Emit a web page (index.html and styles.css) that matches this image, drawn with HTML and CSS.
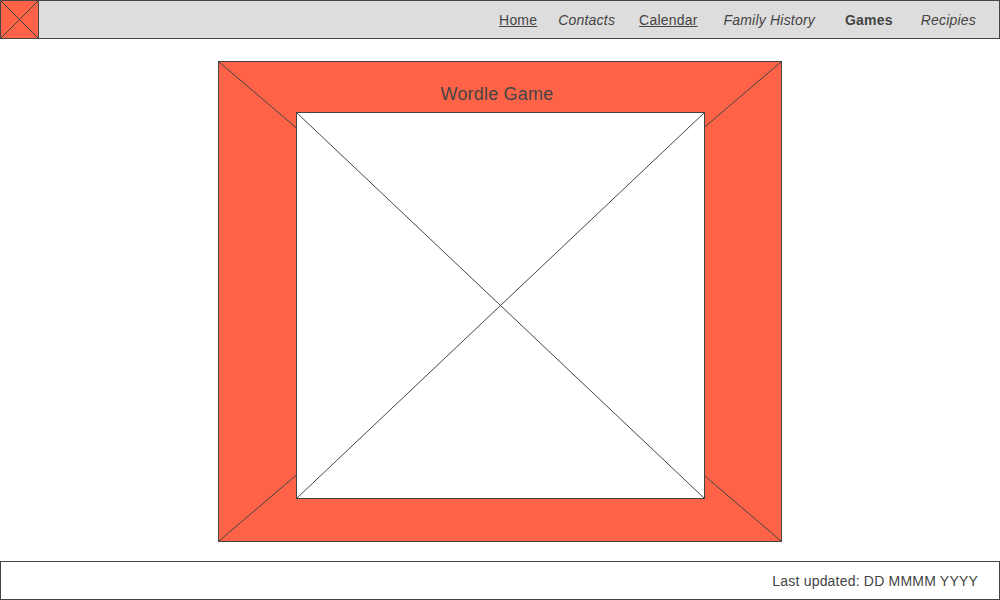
FILE: index.html
```html
<!DOCTYPE html>
<html>
<head>
<meta charset="utf-8">
<link rel="stylesheet" href="styles.css">
</head>
<body>
<header class="topbar">
  <div class="logo">
    <svg class="cross" viewBox="0 0 100 100" preserveAspectRatio="none"><line x1="0" y1="0" x2="100" y2="100" vector-effect="non-scaling-stroke"/><line x1="100" y1="0" x2="0" y2="100" vector-effect="non-scaling-stroke"/></svg>
  </div>
  <nav class="nav">
    <a class="nav-item link">Home</a>
    <span class="nav-item italic">Contacts</span>
    <a class="nav-item link">Calendar</a>
    <span class="nav-item italic">Family History</span>
    <span class="nav-item bold">Games</span>
    <span class="nav-item italic">Recipies</span>
  </nav>
</header>
<main class="main">
  <section class="game">
    <svg class="cross" viewBox="0 0 100 100" preserveAspectRatio="none"><line x1="0" y1="0" x2="100" y2="100" vector-effect="non-scaling-stroke"/><line x1="100" y1="0" x2="0" y2="100" vector-effect="non-scaling-stroke"/></svg>
    <h1 class="game-title">Wordle Game</h1>
    <div class="board">
      <svg class="cross" viewBox="0 0 100 100" preserveAspectRatio="none"><line x1="0" y1="0" x2="100" y2="100" vector-effect="non-scaling-stroke"/><line x1="100" y1="0" x2="0" y2="100" vector-effect="non-scaling-stroke"/></svg>
    </div>
  </section>
</main>
<footer class="footer">Last updated: DD MMMM YYYY</footer>
</body>
</html>
```
FILE: styles.css
```css
* { box-sizing: border-box; }
html, body { margin: 0; padding: 0; }
body {
  width: 1000px;
  height: 600px;
  font-family: "Liberation Sans", Arial, sans-serif;
  letter-spacing: 0.2px;
  color: #444;
  background: #fff;
}
.topbar {
  height: 39px;
  background: #dddddd;
  border: 1px solid #444;
  display: flex;
  align-items: center;
  justify-content: space-between;
}
.logo {
  position: relative;
  width: 38px;
  height: 37px;
  align-self: stretch;
  background: #ff6347;
  border-right: 1px solid #444;
}
.cross {
  position: absolute;
  inset: 0;
  width: 100%;
  height: 100%;
}
.cross line { stroke: #444; stroke-width: 1; }
.nav {
  display: flex;
  align-items: center;
  padding-right: 23px;
  font-size: 14px;
}
.nav-item { color: #444; }
.nav-item:nth-child(2) { margin-left: 21px; }
.nav-item:nth-child(3) { margin-left: 24px; }
.nav-item:nth-child(4) { margin-left: 26px; }
.nav-item:nth-child(5) { margin-left: 30px; }
.nav-item:nth-child(6) { margin-left: 28px; }
.link { text-decoration: underline; }
.italic { font-style: italic; }
.bold { font-weight: bold; }
.main {
  display: flex;
  justify-content: center;
  padding: 22px 0 19px;
}
.game {
  position: relative;
  width: 564px;
  height: 481px;
  background: #ff6347;
  border: 1px solid #444;
  padding: 0 76px 42px 77px;
  display: flex;
  flex-direction: column;
}
.game-title {
  position: relative;
  margin: 0 7px 0 0;
  height: 50px;
  padding-top: 21px;
  font-size: 18px;
  font-weight: normal;
  text-align: center;
  line-height: 22px;
  color: #444;
}
.board {
  position: relative;
  flex: 1;
  background: #fff;
  border: 1px solid #444;
}
.footer {
  height: 39px;
  border: 1px solid #444;
  display: flex;
  align-items: center;
  justify-content: flex-end;
  padding-right: 21px;
  font-size: 14px;
  color: #444;
}
```
